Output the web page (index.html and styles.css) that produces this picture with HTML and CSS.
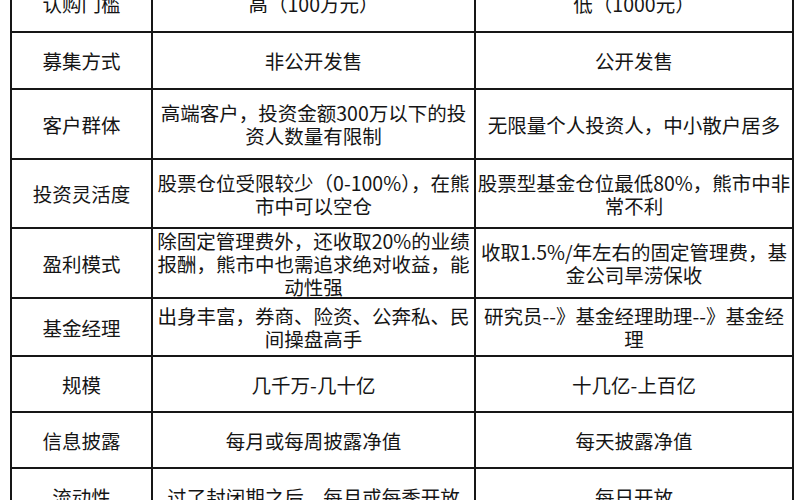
FILE: index.html
```html
<!DOCTYPE html>
<html lang="zh-CN">
<head>
<meta charset="utf-8">
<title>私募基金与公募基金对比</title>
<link rel="stylesheet" href="styles.css">
</head>
<body>
<div class="sheet">
  <div class="grid">
    <div class="cell head">认购门槛</div>
    <div class="cell">高（100万元）</div>
    <div class="cell">低（1000元）</div>

    <div class="cell head">募集方式</div>
    <div class="cell">非公开发售</div>
    <div class="cell">公开发售</div>

    <div class="cell head">客户群体</div>
    <div class="cell">高端客户，投资金额300万以下的投<br>资人数量有限制</div>
    <div class="cell">无限量个人投资人，中小散户居多</div>

    <div class="cell head">投资灵活度</div>
    <div class="cell">股票仓位受限较少（0-100%），在熊<br>市中可以空仓</div>
    <div class="cell">股票型基金仓位最低80%，熊市中非<br>常不利</div>

    <div class="cell head">盈利模式</div>
    <div class="cell">除固定管理费外，还收取20%的业绩<br>报酬，熊市中也需追求绝对收益，能<br>动性强</div>
    <div class="cell">收取1.5%/年左右的固定管理费，基<br>金公司旱涝保收</div>

    <div class="cell head">基金经理</div>
    <div class="cell">出身丰富，券商、险资、公奔私、民<br>间操盘高手</div>
    <div class="cell">研究员--》基金经理助理--》基金经<br>理</div>

    <div class="cell head">规模</div>
    <div class="cell">几千万-几十亿</div>
    <div class="cell">十几亿-上百亿</div>

    <div class="cell head">信息披露</div>
    <div class="cell">每月或每周披露净值</div>
    <div class="cell">每天披露净值</div>

    <div class="cell head">流动性</div>
    <div class="cell">过了封闭期之后，每月或每季开放</div>
    <div class="cell">每日开放</div>
  </div>
</div>
</body>
</html>
```

FILE: styles.css
```css
html, body {
  margin: 0;
  padding: 0;
  background: #ffffff;
  overflow: hidden;
}

body {
  width: 800px;
  height: 500px;
  font-family: "Noto Sans CJK SC", "Noto Sans", sans-serif;
  color: #151515;
}

.sheet {
  margin-top: -24px;
  padding-left: 10px;
}

.grid {
  display: grid;
  width: 782px;
  grid-template-columns: 141px 323px 318px;
  grid-template-rows: 57px 57px 70px 69px 70px 58px 56px 56px 57px;
  border-left: 2px solid #161616;
  box-sizing: border-box;
}

.cell {
  box-sizing: border-box;
  border-right: 2px solid #161616;
  border-bottom: 2px solid #161616;
  display: flex;
  align-items: center;
  justify-content: center;
  text-align: center;
  font-size: 19.5px;
  line-height: 23px;
  white-space: nowrap;
  padding: 0 1px;
  overflow: hidden;
}
```
